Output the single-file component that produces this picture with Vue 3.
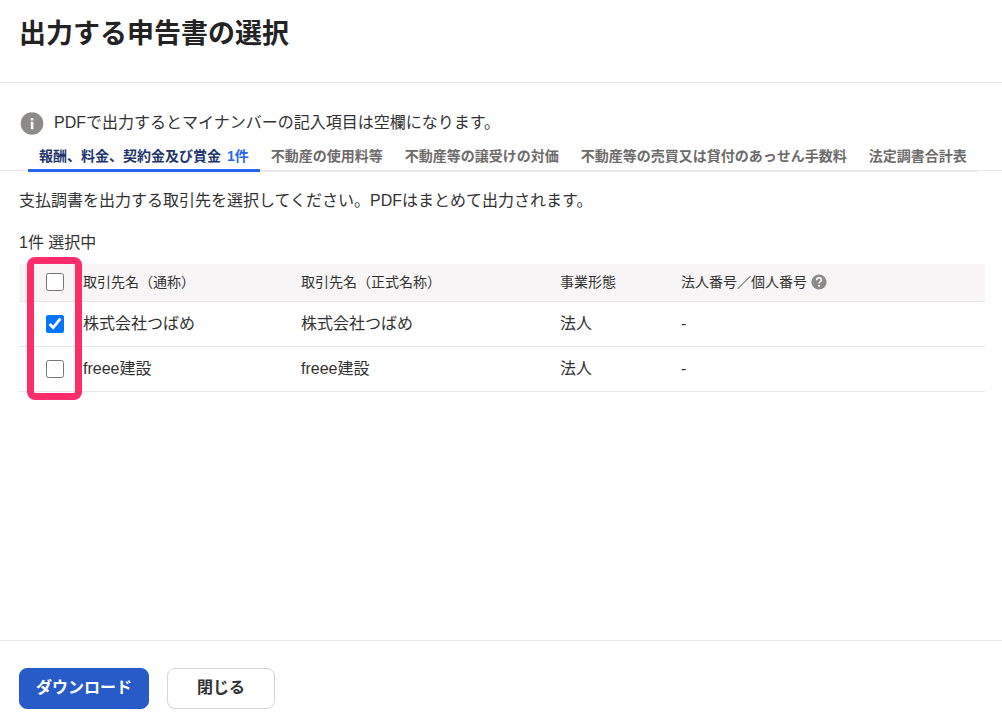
<script setup>
import { computed, ref } from 'vue'

const tabs = [
  { label: '報酬、料金、契約金及び賞金', count: '1件' },
  { label: '不動産の使用料等' },
  { label: '不動産等の譲受けの対価' },
  { label: '不動産等の売買又は貸付のあっせん手数料' },
  { label: '法定調書合計表' },
]
const activeTab = ref(0)

const partners = ref([
  { id: 1, name: '株式会社つばめ', formal: '株式会社つばめ', type: '法人', number: '-', checked: true },
  { id: 2, name: 'freee建設', formal: 'freee建設', type: '法人', number: '-', checked: false },
])
const selectedCount = computed(() => partners.value.filter((p) => p.checked).length)
const allChecked = computed({
  get: () => partners.value.every((p) => p.checked),
  set: (value) => partners.value.forEach((p) => (p.checked = value)),
})
</script>

<template>
  <div class="dialog">
    <header class="dialog-header">
      <h1>出力する申告書の選択</h1>
    </header>

    <main class="dialog-body">
      <p class="notice">
        <svg class="info-icon" viewBox="0 0 24 24" aria-hidden="true">
          <circle cx="12" cy="12.5" r="11.3" />
          <rect x="10.8" y="7" width="2.6" height="2.4" />
          <rect x="10.8" y="10.8" width="2.6" height="7.4" />
        </svg>
        <span>PDFで出力するとマイナンバーの記入項目は空欄になります。</span>
      </p>

      <div class="tab-bar">
        <div class="tabs" role="tablist">
          <button
            v-for="(tab, i) in tabs"
            :key="tab.label"
            type="button"
            role="tab"
            class="tab"
            :class="{ active: i === activeTab }"
            :aria-selected="i === activeTab"
            @click="activeTab = i"
          >
            <span>{{ tab.label }}</span>
            <span v-if="tab.count" class="count">{{ tab.count }}</span>
          </button>
        </div>
      </div>

      <section class="content">
        <p class="lead">支払調書を出力する取引先を選択してください。PDFはまとめて出力されます。</p>
        <p class="selected">{{ selectedCount }}件 選択中</p>

        <div class="table-wrap">
          <table>
            <colgroup>
              <col class="col-check" />
              <col class="col-name" />
              <col class="col-formal" />
              <col class="col-type" />
              <col />
            </colgroup>
            <thead>
              <tr>
                <th class="check"><input v-model="allChecked" type="checkbox" aria-label="すべて選択" /></th>
                <th>取引先名（通称）</th>
                <th>取引先名（正式名称）</th>
                <th>事業形態</th>
                <th>
                  <span class="with-help">
                    法人番号／個人番号
                    <svg class="help-icon" viewBox="0 0 16 16" aria-hidden="true">
                      <circle cx="8" cy="8" r="7.6" />
                      <path d="M5.6 6.2C5.6 4.7 6.6 3.8 8 3.8s2.4.9 2.4 2.2c0 1.6-2.3 1.7-2.3 3.5" />
                      <rect x="7.2" y="10.9" width="1.7" height="1.7" />
                    </svg>
                  </span>
                </th>
              </tr>
            </thead>
            <tbody>
              <tr v-for="p in partners" :key="p.id">
                <td class="check"><input v-model="p.checked" type="checkbox" :aria-label="p.name" /></td>
                <td>{{ p.name }}</td>
                <td>{{ p.formal }}</td>
                <td>{{ p.type }}</td>
                <td>{{ p.number }}</td>
              </tr>
            </tbody>
          </table>
          <div class="highlight"></div>
        </div>
      </section>
    </main>

    <footer class="dialog-footer">
      <button type="button" class="btn primary">ダウンロード</button>
      <button type="button" class="btn">閉じる</button>
    </footer>
  </div>
</template>

<style>
body {
  background: #fff;
}
</style>

<style scoped>
.dialog,
.dialog button {
  font-family: "Liberation Sans", "Noto Sans CJK JP", sans-serif;
}
.dialog {
  box-sizing: border-box;
  min-height: 100vh;
  display: flex;
  flex-direction: column;
  color: #323232;
  font-size: 16px;
  line-height: 24px;
}
.dialog-header {
  padding: 17px 19px 31px;
  border-bottom: 1px solid #e9e7e7;
}
h1 {
  margin: 0;
  font-size: 27px;
  line-height: 34px;
  color: #232323;
}
p {
  margin: 0;
}
.dialog-body {
  flex: 1;
  padding-top: 28px;
}
.notice {
  display: flex;
  align-items: center;
  gap: 10px;
  padding: 0 20px;
}
.info-icon {
  width: 24px;
  height: 24px;
  fill: #8c8b89;
}
.info-icon rect {
  fill: #fff;
}
.tab-bar {
  display: flex;
  padding: 0 26px 0 28px;
  margin-top: 6px;
  background: linear-gradient(#e9e7e7, #e9e7e7) 0 29px / 100% 1px no-repeat;
}
.tabs {
  display: flex;
  box-shadow: inset 0 -2px #e9e7e7;
}
.tab {
  display: flex;
  gap: 6px;
  box-sizing: border-box;
  height: 31px;
  padding: 5px 11px 2px;
  border: 0;
  border-bottom: 3px solid transparent;
  background: none;
  color: #6e6b6b;
  font-size: 14px;
  font-weight: bold;
  line-height: 21px;
  white-space: nowrap;
}
.tab.active {
  border-bottom-color: #2864f0;
  color: #23356b;
}
.tab .count {
  color: #2864f0;
}
.content {
  padding: 17px 17px 16px 19px;
}
.selected {
  margin-top: 18px;
}
.table-wrap {
  position: relative;
  margin-top: 9px;
}
table {
  width: 100%;
  table-layout: fixed;
  border-spacing: 0;
}
.col-check {
  width: 64px;
}
.col-name {
  width: 218px;
}
.col-formal {
  width: 259px;
}
.col-type {
  width: 121px;
}
th,
td {
  padding: 0;
  border-bottom: 1px solid #e9e7e7;
  text-align: left;
  white-space: nowrap;
}
th {
  height: 35px;
  padding-bottom: 2px;
  background: #f7f5f5;
  font-size: 14px;
  font-weight: normal;
}
td {
  height: 44px;
}
.check {
  padding-left: 27px;
}
input {
  display: block;
  width: 18px;
  height: 18px;
  margin: 0;
}
.with-help {
  display: flex;
  align-items: center;
  gap: 4px;
}
.help-icon {
  width: 16px;
  height: 16px;
  fill: #8c8b89;
}
.help-icon path {
  fill: none;
  stroke: #fff;
  stroke-width: 1.6;
}
.help-icon rect {
  fill: #fff;
}
.highlight {
  position: absolute;
  top: -7px;
  bottom: -8px;
  left: 8px;
  box-sizing: border-box;
  width: 55px;
  border: 7px solid #ff2d6b;
  border-radius: 8px;
  pointer-events: none;
}
.dialog-footer {
  display: flex;
  gap: 18px;
  padding: 27px 19px 12px;
  border-top: 1px solid #e9e7e7;
}
.btn {
  padding: 7px 29px 8px;
  border: 1px solid #d7d5d5;
  border-radius: 8px;
  background: #fff;
  color: #323232;
  font-size: 16px;
  font-weight: bold;
  line-height: 24px;
}
.btn.primary {
  padding: 7px 16px 8px;
  border-color: #285ac8;
  background: #285ac8;
  color: #fff;
}
</style>
